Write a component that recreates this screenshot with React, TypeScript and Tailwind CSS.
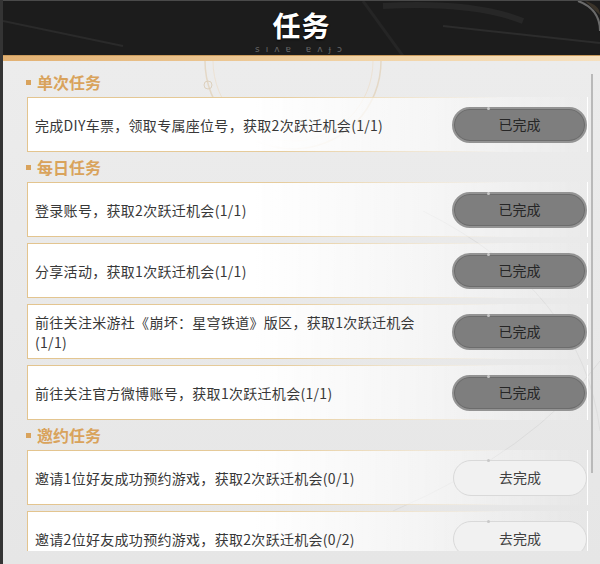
import React from "react";

type Task = { text: string; done: boolean };

const SECTIONS: { title: string; tasks: Task[] }[] = [
  {
    title: "单次任务",
    tasks: [{ text: "完成DIY车票，领取专属座位号，获取2次跃迁机会(1/1)", done: true }],
  },
  {
    title: "每日任务",
    tasks: [
      { text: "登录账号，获取2次跃迁机会(1/1)", done: true },
      { text: "分享活动，获取1次跃迁机会(1/1)", done: true },
      { text: "前往关注米游社《崩坏：星穹铁道》版区，获取1次跃迁机会(1/1)", done: true },
      { text: "前往关注官方微博账号，获取1次跃迁机会(1/1)", done: true },
    ],
  },
  {
    title: "邀约任务",
    tasks: [
      { text: "邀请1位好友成功预约游戏，获取2次跃迁机会(0/1)", done: false },
      { text: "邀请2位好友成功预约游戏，获取2次跃迁机会(0/2)", done: false },
    ],
  },
];

function TaskButton({ done }: { done: boolean }) {
  return (
    <div
      className={
        done
          ? "relative w-[135px] h-[36px] shrink-0 flex items-center justify-center rounded-full bg-[#7e7e7e] border-2 border-[#939393] shadow-[inset_0_0_0_1px_#6c6c6c]"
          : "relative w-[134px] h-[36px] shrink-0 flex items-center justify-center rounded-full bg-[#f1f1f1] border border-[#d9d9d9]"
      }
    >
      <span className="absolute -top-[2px] left-[33px] w-[3px] h-[3px] rounded-full bg-[#c8c8c8]" />
      <span className={done ? "text-[14px] text-neutral-800" : "text-[14px] text-neutral-700"}>
        {done ? "已完成" : "去完成"}
      </span>
    </div>
  );
}

function TaskCard({ task }: { task: Task }) {
  return (
    <div className="h-[55px] shrink-0 flex items-center pl-[7px] border [border-image:linear-gradient(to_right,#e3c48e,#e6cc9c_45%,rgba(230,204,156,0)_85%)_1] bg-[linear-gradient(to_right,#ffffff,#ffffff_40%,rgba(255,255,255,0.55)_72%,rgba(255,255,255,0)_100%)]">
      <div className="flex-1 pr-[16px] text-[14px] leading-[20px] text-[#383838] tracking-[0.3px]">{task.text}</div>
      <TaskButton done={task.done} />
    </div>
  );
}

export default function App() {
  return (
    <div className="w-[600px] h-[564px] flex flex-col overflow-hidden border-l-[3px] border-[#343434] bg-[#e7e7e7] font-['Microsoft_YaHei','Noto_Sans_CJK_SC',sans-serif]">
      <header className="relative h-[55px] shrink-0 bg-[#1c1c1c] border-t border-[#4a4a4a] flex flex-col items-center overflow-hidden">
        <svg className="absolute inset-0" width="597" height="55" viewBox="0 0 597 55" fill="none">
          <path d="M0 20 L120 45" stroke="#2a2a2a" strokeWidth="2" />
          <path d="M360 0 L400 55" stroke="#252525" strokeWidth="3" />
          <path d="M440 25 L597 42" stroke="#2c2c2c" strokeWidth="2" />
          <path d="M380 5 Q470 0 520 20" stroke="#272727" strokeWidth="6" />
          <path d="M575 0 Q597 8 597 30" stroke="#6a6a6a" strokeWidth="2" />
          <path d="M582 0 Q597 4 597 14" fill="#3b342a" />
        </svg>
        <h1 className="relative mt-[9px] text-[28px] leading-[30px] font-bold text-white tracking-[1px] [text-shadow:0_1px_2px_#000]">
          任务
        </h1>
        <div className="relative mt-[5px] text-[9px] leading-[9px] tracking-[6px] text-[#666] font-['DejaVu_Sans',sans-serif]">
          sıʌɐ ɐʌɟɔ
        </div>
      </header>
      <div className="h-[6px] shrink-0 border-t border-[#c99a5c] bg-[linear-gradient(to_right,#e2b173,#f1d3a6_60%,#f6e0be)]" />
      <div className="relative flex-1 flex min-h-0 overflow-hidden bg-[linear-gradient(to_bottom,#ececec,#e6e6e6)]">
        <svg className="absolute left-[190px] top-[-60px]" width="200" height="160" viewBox="0 0 200 160" fill="none">
          <circle cx="100" cy="60" r="88" stroke="#e4d8c6" strokeWidth="1.5" />
          <circle cx="100" cy="60" r="80" stroke="#ece2d4" strokeWidth="1" />
          <circle cx="15" cy="84" r="4" stroke="#ddd0bd" strokeWidth="1" />
        </svg>
        <svg className="absolute left-[380px] top-[150px]" width="217" height="340" viewBox="0 0 217 340" fill="none">
          <path d="M40 0 Q200 80 217 220" stroke="#dedede" strokeWidth="1" />
          <path d="M10 300 Q150 240 217 150" stroke="#dcdcdc" strokeWidth="1" />
        </svg>
        <div className="relative flex-1 flex flex-col h-[490px] overflow-hidden pl-[24px] pt-[6px]">
          {SECTIONS.map((section) => (
            <div key={section.title} className="flex flex-col">
              <div className="h-[30px] flex items-center">
                <span className="w-[5px] h-[5px] bg-[#d9a35c] ml-[-1px]" />
                <span className="ml-[6px] text-[16px] font-bold text-[#d9a35c]">{section.title}</span>
              </div>
              <div className="flex flex-col gap-[6px]">
                {section.tasks.map((task) => (
                  <TaskCard key={task.text} task={task} />
                ))}
              </div>
            </div>
          ))}
        </div>
        <div className="relative w-[12px] shrink-0 pl-[3px] pt-[13px]">
          <div className="w-[2px] h-[399px] bg-[#b9b9b9]" />
        </div>
      </div>
    </div>
  );
}
